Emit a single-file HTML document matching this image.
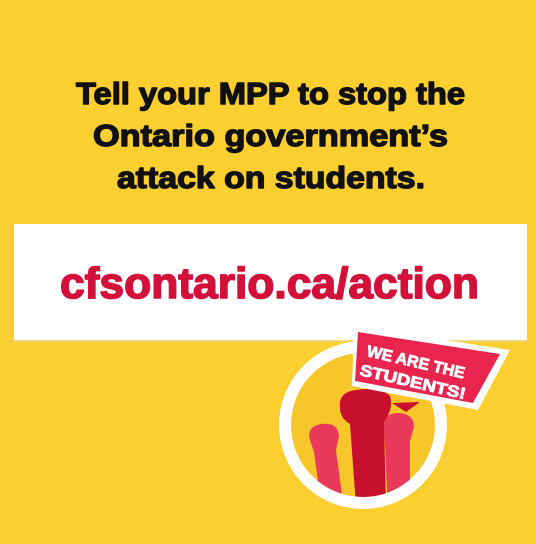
<!DOCTYPE html>
<html><head><meta charset="utf-8"><style>
html,body{margin:0;padding:0;}
body{width:536px;height:544px;background:#fbcf30;overflow:hidden;position:relative;font-family:"Liberation Sans",sans-serif;}
svg{position:absolute;left:0;top:0;}
</style></head><body>
<svg width="536" height="544" viewBox="0 0 536 544">
<rect width="536" height="544" fill="#fbcf30"/>
<g font-family="Liberation Sans, sans-serif" font-weight="bold" fill="#111" stroke="#111" stroke-width="1.4" stroke-linejoin="round" font-size="31">
<text x="76" y="104" textLength="389" lengthAdjust="spacingAndGlyphs">Tell your MPP to stop the</text>
<text x="93" y="146" textLength="355" lengthAdjust="spacingAndGlyphs">Ontario government’s</text>
<text x="117" y="188" textLength="308" lengthAdjust="spacingAndGlyphs">attack on students.</text>
</g>
<rect x="14" y="226" width="513" height="116" fill="#eadcb0" opacity="0.6"/>
<rect x="14" y="224" width="513" height="116" fill="#fff"/>
<text x="60" y="298" font-family="Liberation Sans, sans-serif" font-weight="bold" font-size="44" fill="#d2103a" stroke="#d2103a" stroke-width="1.6" stroke-linejoin="round" textLength="419" lengthAdjust="spacingAndGlyphs">cfsontario.ca/action</text>
<circle cx="363" cy="425" r="84" fill="#fff"/>
<clipPath id="c"><circle cx="363" cy="425" r="72"/></clipPath>
<circle cx="363" cy="425" r="72" fill="#f7c62a"/>
<g clip-path="url(#c)">
<path d="M310 440 q-4-14 12-16 q16-2 17 12 l-3 14 l8 60 h-22 l-8-58 z" fill="#ea3a5c"/>
<path d="M384 428 q-2-14 13-15 q17 0 17 14 l-4 14 l0 70 h-22 l-3-66 z" fill="#ea3a5c"/>
<path d="M340 408 q-2-16 16-18 q24-4 34 6 q4 12-6 26 l2 84 h-30 l-6-82 q-10-6-10-16 z" fill="#c8102e"/>
</g>
<polygon points="354,326 510,350 478,410 352,386" fill="#fff"/>
<polygon points="358,332 500,354 473,403 355,381" fill="#e8244f"/>
<polygon points="392,403 420,402 406,412" fill="#c8102e"/>
<g font-family="Liberation Sans, sans-serif" font-weight="bold" font-size="16" fill="#fff" stroke="#fff" stroke-width="0.8">
<text x="366" y="356" transform="rotate(13 366 356)" textLength="100" lengthAdjust="spacingAndGlyphs">WE ARE THE</text>
<text x="359" y="375" transform="rotate(13 359 375)" textLength="108" lengthAdjust="spacingAndGlyphs">STUDENTS!</text>
</g>
</svg>
</body></html>
